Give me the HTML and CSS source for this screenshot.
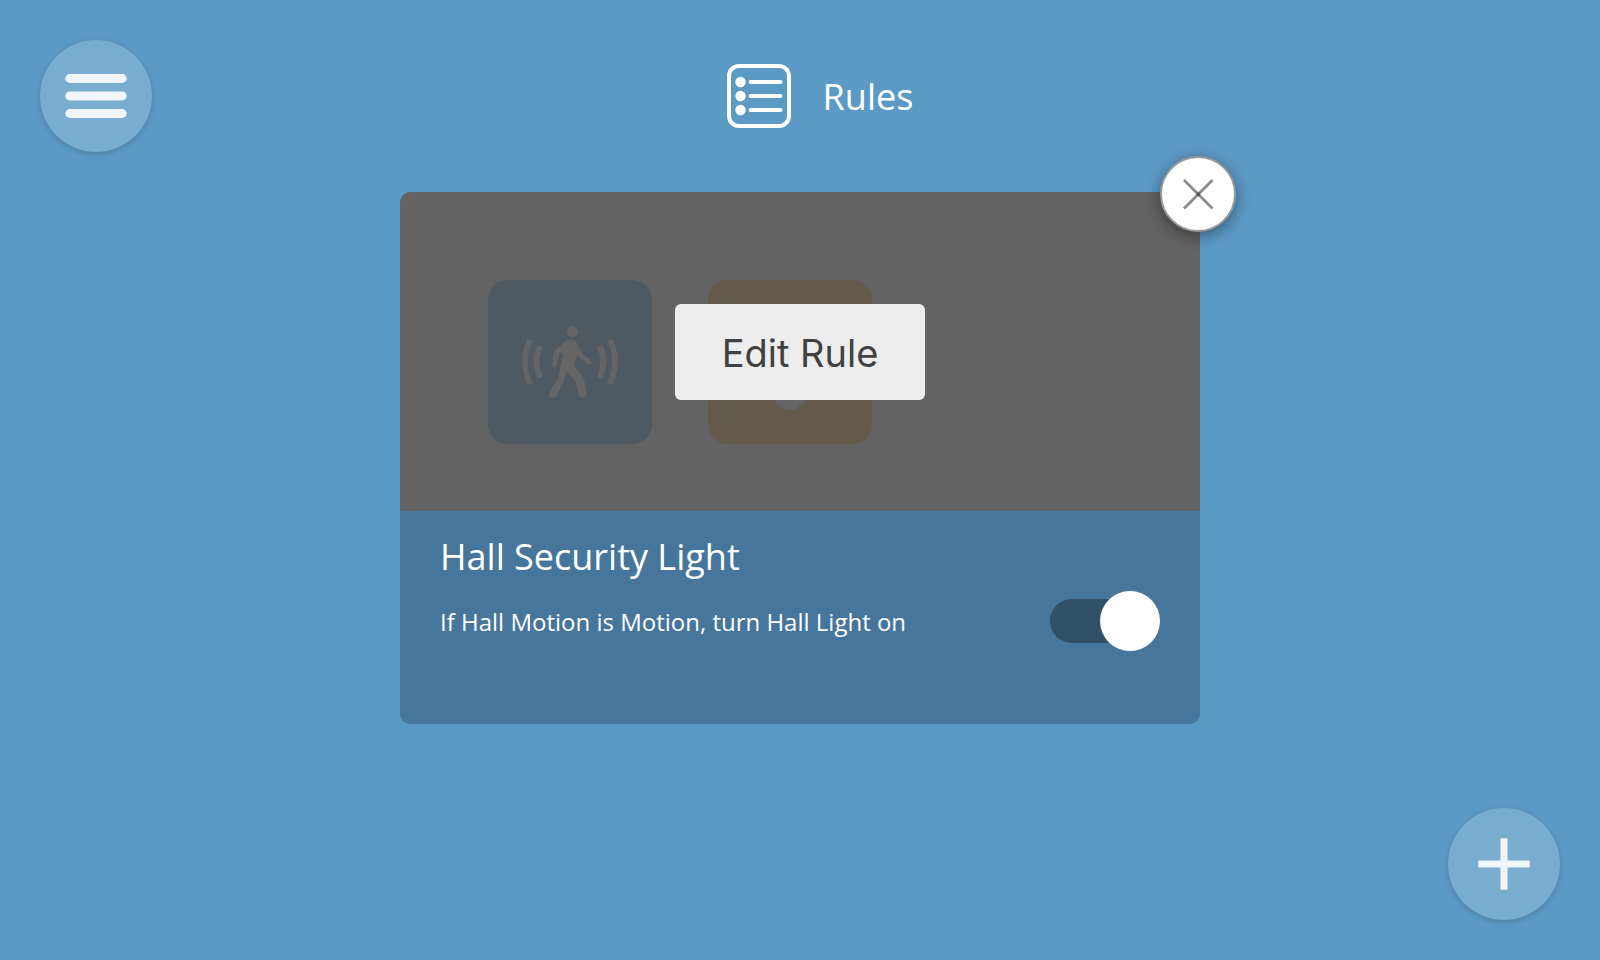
FILE: index.html
```html
<!DOCTYPE html>
<html lang="en">
<head>
<meta charset="utf-8">
<title>Rules</title>
<link rel="stylesheet" href="styles.css">
</head>
<body>
<div class="page">
  <header class="top">
    <button class="round" type="button" aria-label="Menu">
      <svg width="112" height="112" viewBox="0 0 112 112"><path d="M29.700 38.500H82.300M29.700 56H82.300M29.700 73.500H82.300" stroke="#f0f5fa" stroke-width="8.800" stroke-linecap="round"/></svg>
    </button>
    <div class="heading">
      <svg width="64" height="64" viewBox="0 0 64 64" fill="none" stroke="#fff" stroke-width="4" stroke-linecap="round"><rect x="2" y="2" width="60" height="60" rx="10"/><path d="M23.500 18H53.500M23.500 32H53.500M23.500 46H53.500"/><g fill="#fff" stroke="none"><circle cx="13.500" cy="18" r="5.200"/><circle cx="13.500" cy="32" r="5.200"/><circle cx="13.500" cy="46" r="5.200"/></g></svg>
      <h1 class="title">Rules</h1>
    </div>
  </header>
  <main class="main">
    <article class="card">
      <div class="preview">
        <div class="tile tile-motion">
          <svg width="164" height="164" viewBox="0 0 164 164" fill="none" stroke="#656565" stroke-linecap="round" stroke-linejoin="round">
            <circle cx="84.500" cy="51.700" r="5.800" fill="#656565" stroke="none"/>
            <path d="M80 62.500L68.500 73L66 85" stroke-width="5.200"/>
            <path d="M86 63L93 76L101 82" stroke-width="5.200"/>
            <path d="M83.500 59.500Q87 59.500 88.500 63L91 69L86 86L95 97Q96.500 100 97.500 107L98.500 113A4 4 0 0 1 90.500 114.500L87.500 101L78.500 92L75.500 102L68.500 116A4 4 0 0 1 61.500 112L70 98L75 74L71 70L78 62Q81 59.500 83.500 59.500Z" fill="#656565" stroke="none"/>
            <g stroke-linecap="butt" stroke-width="5.800"><path d="M42 60Q32 82 42 104M52.500 66Q44.500 82 52.500 98M122 60Q132 82 122 104M111.500 66Q119.500 82 111.500 98"/></g>
          </svg>
        </div>
        <div class="tile tile-light">
          <svg width="164" height="164" viewBox="0 0 164 164"><path d="M67.500 110H96.500V122Q96.500 124 94 124Q91.500 124.500 90 127Q87.500 130 84 130H80Q76.500 130 74 127Q72.500 124.500 70 124Q67.500 124 67.500 122Z" fill="#656565"/></svg>
        </div>
        <div class="cover"><button class="edit" type="button">Edit Rule</button></div>
      </div>
      <div class="info">
        <h2 class="title">Hall Security Light</h2>
        <div class="row">
          <label class="desc" for="enabled">If Hall Motion is Motion, turn Hall Light on</label>
          <input class="switch" id="enabled" type="checkbox" role="switch" checked>
        </div>
      </div>
      <button class="close" type="button" aria-label="Close">
        <svg width="72" height="72" viewBox="0 0 72 72"><path d="M22 22L50.500 50.500M50.500 22L22 50.500" stroke="#8c8c8c" stroke-width="2.800"/><circle cx="36.250" cy="36.250" r="1.900" fill="#585858"/></svg>
      </button>
    </article>
  </main>
  <footer class="bottom">
    <button class="round" type="button" aria-label="Add rule">
      <svg width="112" height="112" viewBox="0 0 112 112"><path d="M30.300 56H81.700M56 30.300V81.700" stroke="#f0f5fa" stroke-width="7"/></svg>
    </button>
  </footer>
</div>
</body>
</html>
```
FILE: styles.css
```css
* { box-sizing: border-box; }
body {
  margin: 0;
  background: #5c9ac6;
  color: #fff;
  font-family: "Open Sans", "Noto Sans", sans-serif;
}
button { border: 0; padding: 0; cursor: pointer; }
svg { display: block; }
.page {
  min-height: 100vh;
  padding: 40px;
  display: flex;
  flex-direction: column;
}
.top {
  display: grid;
  grid-template-columns: 1fr auto 1fr;
  align-items: center;
}
.round {
  width: 112px;
  height: 112px;
  border-radius: 50%;
  background: #79adcf;
  box-shadow: 0 2px 6px rgba(0, 0, 0, 0.18);
}
.heading { display: flex; align-items: center; gap: 32px; padding-left: 40px; }
.title { margin: 0; font-size: 36px; line-height: 48px; font-weight: 400; }
.heading .title { padding-top: 2px; }
.main { flex: 1; padding-top: 40px; }
.card {
  position: relative;
  width: 100%;
  max-width: 800px;
  margin: 0 auto;
}
.preview {
  position: relative;
  display: flex;
  gap: 56px;
  padding: 88px 88px 67px;
  border-radius: 10px 10px 0 0;
  background: radial-gradient(circle, #626262 2px, #636363 3px) 0 0 / 32px 32px;
}
.tile { border-radius: 20px; }
.tile-motion { background: #4f5961; }
.tile-light { background: #655b4c; }
.cover {
  position: absolute;
  inset: 0;
  display: flex;
  align-items: center;
  justify-content: center;
}
.edit {
  width: 250px;
  height: 96px;
  padding-top: 2px;
  border-radius: 6px;
  background: #ededed;
  color: #414141;
  font: 400 38px Inter, sans-serif;
}
.info {
  padding: 22px 40px 73px;
  border-radius: 0 0 10px 10px;
  background: #46769c;
}
.row {
  display: flex;
  align-items: center;
  justify-content: space-between;
  gap: 32px;
  padding-top: 10px;
}
.desc { font-size: 24px; line-height: 32px; padding-top: 2px; }
.switch {
  appearance: none;
  flex: none;
  display: flex;
  align-items: center;
  justify-content: flex-end;
  width: 110px;
  height: 44px;
  margin: 8px 0;
  border-radius: 22px;
  background: #305067;
}
.switch::before {
  content: "";
  width: 60px;
  height: 60px;
  border-radius: 50%;
  background: #fff;
}
.switch:not(:checked) { justify-content: flex-start; }
.close {
  position: absolute;
  top: -36px;
  right: -36px;
  width: 76px;
  height: 76px;
  border: 2px solid #999;
  border-radius: 50%;
  background: #fff;
  box-shadow: 0 4px 16px rgba(0, 0, 0, 0.42);
}
.bottom { display: flex; justify-content: flex-end; }
```
